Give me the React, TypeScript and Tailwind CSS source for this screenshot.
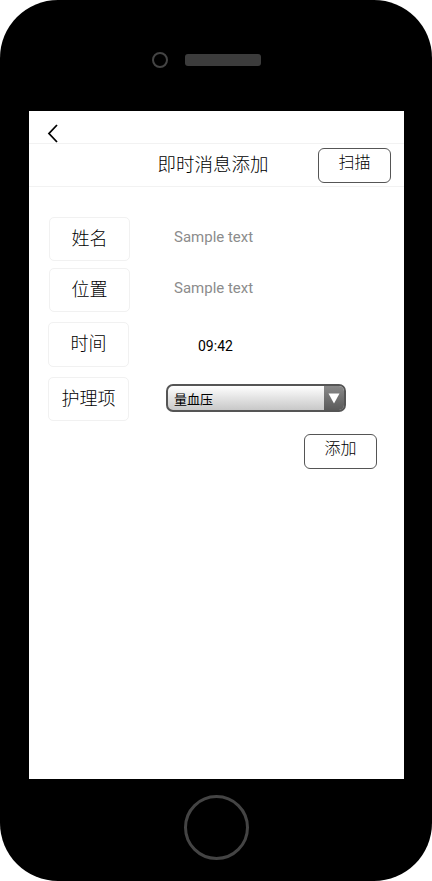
import React from "react";

const cjk = { fontFamily: '"Noto Sans CJK SC", "Noto Sans", sans-serif' };
const latin = { fontFamily: 'Roboto, "Noto Sans", sans-serif' };

function LabelBox({ text, h = "h-[44px]" }: { text: string; h?: string }) {
  return (
    <div
      className={`w-[81px] ${h} shrink-0 border border-[#f1f1f1] rounded-[5px] flex items-center justify-center pb-[5px] text-[18px] font-light text-black leading-none`}
      style={cjk}
    >
      {text}
    </div>
  );
}

export default function App() {
  return (
    <div className="w-[432px] h-[881px] bg-white">
      <div className="w-[432px] h-[881px] bg-black rounded-[58px] flex flex-col">
        {/* top bezel */}
        <div className="h-[111px] flex items-start pt-[52px] pl-[152px] gap-[17px]">
          <div className="w-[16px] h-[16px] rounded-full border-2 border-[#444]" />
          <div className="mt-[2px] w-[76px] h-[12px] rounded-[3px] bg-[#3c3c3c]" />
        </div>
        {/* screen */}
        <div className="ml-[29px] w-[375px] h-[668px] bg-white flex flex-col">
          <div className="h-[32px] pl-[18px] pt-[13px]">
            <svg width="12" height="19" viewBox="0 0 12 19">
              <path d="M10 1 L2 9.5 L10 18" fill="none" stroke="#000" strokeWidth="1.8" />
            </svg>
          </div>
          <div className="h-[44px] border-t border-b border-[#f2f2f2] relative flex items-center justify-center">
            <span className="text-[18.5px] font-light text-black leading-none ml-[-7px] mb-[3px]" style={cjk}>
              即时消息添加
            </span>
            <div
              className="absolute left-[289px] top-[4px] w-[73px] h-[35px] border border-[#555] rounded-[6px] flex justify-center pt-[2px] text-[16px] font-light leading-[20px] text-black"
              style={cjk}
            >
              扫描
            </div>
          </div>
          <div className="flex flex-col pl-[20px] pt-[30px]">
            <div className="flex items-center">
              <LabelBox text="姓名" />
              <span className="ml-[44px] mb-[3px] text-[15px] text-[#8c8c8c]" style={latin}>
                Sample text
              </span>
            </div>
            <div className="flex items-center mt-[7px]">
              <LabelBox text="位置" />
              <span className="ml-[44px] mb-[3px] text-[15px] text-[#8c8c8c]" style={latin}>
                Sample text
              </span>
            </div>
            <div className="flex items-center mt-[10px] -ml-[1px]">
              <LabelBox text="时间" h="h-[45px]" />
              <span className="ml-[69px] mt-[3px] text-[14px] text-black" style={latin}>
                09:42
              </span>
            </div>
            <div className="flex items-center mt-[10px] -ml-[1px]">
              <LabelBox text="护理项" />
              <div className="ml-[37px] -mt-[2px] w-[180px] h-[28px] rounded-[7px] border-2 border-[#555] overflow-hidden flex bg-gradient-to-b from-white to-[#c8c8c8]">
                <div className="flex-1 flex items-center pl-[6px] text-[13px] text-black leading-none" style={cjk}>
                  量血压
                </div>
                <div className="w-[20px] h-full bg-gradient-to-b from-[#8a8a8a] to-[#5a5a5a] flex items-center justify-center">
                  <svg width="12" height="11" viewBox="0 0 12 11">
                    <path d="M0.5 0.5 L11.5 0.5 L6 10.5 Z" fill="#fff" />
                  </svg>
                </div>
              </div>
            </div>
            <div className="flex justify-end pr-[27px] mt-[13px]">
              <div
                className="w-[73px] h-[35px] border border-[#555] rounded-[6px] flex justify-center pt-[2px] text-[16px] font-light leading-[20px] text-black"
                style={cjk}
              >
                添加
              </div>
            </div>
          </div>
        </div>
        {/* bottom bezel */}
        <div className="flex-1 flex justify-center pt-[16px]">
          <div className="w-[65px] h-[65px] rounded-full border-[3px] border-[#444]" />
        </div>
      </div>
    </div>
  );
}
